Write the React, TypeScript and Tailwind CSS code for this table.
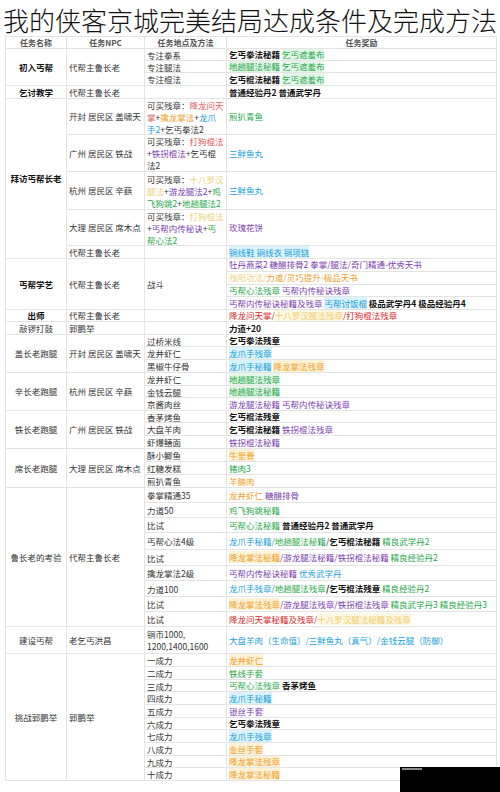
import React from "react";

type Seg = [string, string];
type Line = Seg[];
type Item = { h: number; loc: Line[]; reward: Line[] };
type Sub = { npc: string; items: Item[] };
type Group = { label: string; bold?: boolean; subs: Sub[] };

const S: Record<string, string> = {
  n: "text-[#333]",
  k: "font-bold text-[#111]",
  g: "text-[#1fa84a]",
  gb: "text-[#1fa84a] bg-[#e4f6e8]",
  c: "text-[#1a9fd8]",
  cb: "text-[#1a9fd8] bg-[#daf2fb]",
  p: "text-[#7a3cb0]",
  o: "text-[#f0a028]",
  ob: "text-[#f0a028] bg-[#fdf2d6]",
  r: "text-[#d62828]",
  rl: "text-[#e25a5a]",
  y: "text-[#f2d078]",
  yb: "text-[#efcc6c] bg-[#fdf8e2]",
};

const t = (s: string, k = "n"): Seg => [s, k];
const one = (...segs: Seg[]): Line[] => [segs];

const groups: Group[] = [
  {
    label: "初入丐帮",
    bold: true,
    subs: [
      {
        npc: "代帮主鲁长老",
        items: [
          { h: 12, loc: one(t("专注拳系")), reward: one(t("乞丐拳法秘籍", "k"), t(" "), t("乞丐遮羞布", "gb")) },
          { h: 12, loc: one(t("专注腿法")), reward: one(t("地趟腿法秘籍", "gb"), t(" "), t("乞丐遮羞布", "gb")) },
          { h: 13, loc: one(t("专注棍法")), reward: one(t("乞丐棍法秘籍", "k"), t(" "), t("乞丐遮羞布", "gb")) },
        ],
      },
    ],
  },
  {
    label: "乞讨教学",
    bold: true,
    subs: [{ npc: "代帮主鲁长老", items: [{ h: 13, loc: [], reward: one(t("普通经验丹2 普通武学丹", "k")) }] }],
  },
  {
    label: "拜访丐帮长老",
    bold: true,
    subs: [
      {
        npc: "开封 居民区 盖啸天",
        items: [
          {
            h: 36,
            loc: [
              [t("可买残章："), t("降龙问天", "rl")],
              [t("掌", "rl"), t("+"), t("擒龙掌法", "o"), t("+"), t("龙爪", "c")],
              [t("手2", "c"), t("+乞丐拳法2")],
            ],
            reward: one(t("煎扒青鱼", "g")),
          },
        ],
      },
      {
        npc: "广州 居民区 铁战",
        items: [
          {
            h: 37,
            loc: [
              [t("可买残章："), t("打狗棍法", "rl")],
              [t("+"), t("铁拐棍法", "p"), t("+乞丐棍")],
              [t("法2")],
            ],
            reward: one(t("三鲜鱼丸", "c")),
          },
        ],
      },
      {
        npc: "杭州 居民区 辛蕻",
        items: [
          {
            h: 38,
            loc: [
              [t("可买残章："), t("十八罗汉", "y")],
              [t("腿法", "y"), t("+"), t("游龙腿法2", "p"), t("+"), t("鸡", "g")],
              [t("飞狗跳2", "g"), t("+"), t("地趟腿法2", "g")],
            ],
            reward: one(t("三鲜鱼丸", "c")),
          },
        ],
      },
      {
        npc: "大理 居民区 席木点",
        items: [
          {
            h: 36,
            loc: [
              [t("可买残章："), t("打狗棍法", "y")],
              [t("+"), t("丐帮内传秘诀", "p"), t("+"), t("丐", "g")],
              [t("帮心法2", "g")],
            ],
            reward: one(t("玫瑰花饼", "p")),
          },
        ],
      },
      { npc: "代帮主鲁长老", items: [{ h: 13, loc: [], reward: one(t("铜线鞋 铜线衣 铜项链", "cb")) }] },
    ],
  },
  {
    label: "丐帮学艺",
    bold: true,
    subs: [
      {
        npc: "代帮主鲁长老",
        items: [
          {
            h: 51,
            loc: one(t("战斗")),
            reward: [
              [t("牡丹燕菜2 糖醋排骨2 拳掌/腿法/奇门精通-优秀天书", "p")],
              [t("残阳功法/", "y"), t("力道/灵巧提升-极品天书", "o")],
              [t("丐帮心法残章", "g"), t(" "), t("丐帮内传秘诀残章", "p")],
              [t("丐帮内传秘诀秘籍及残章", "p"), t(" "), t("丐帮讨饭棍", "cb"), t(" "), t("极品武学丹4 极品经验丹4", "k")],
            ],
          },
        ],
      },
    ],
  },
  {
    label: "出师",
    bold: true,
    subs: [
      {
        npc: "代帮主鲁长老",
        items: [{ h: 12, loc: [], reward: one(t("降龙问天掌", "r"), t("/", "r"), t("十八罗汉腿法残章", "yb"), t("/打狗棍法残章", "r")) }],
      },
    ],
  },
  {
    label: "敲锣打鼓",
    subs: [{ npc: "郭鹏举", items: [{ h: 13, loc: [], reward: one(t("力道+20", "k")) }] }],
  },
  {
    label: "盖长老跑腿",
    subs: [
      {
        npc: "开封 居民区 盖啸天",
        items: [
          { h: 12, loc: one(t("过桥米线")), reward: one(t("乞丐拳法残章", "k")) },
          { h: 13, loc: one(t("龙井虾仁")), reward: one(t("龙爪手残章", "cb")) },
          { h: 13, loc: one(t("黑椒牛仔骨")), reward: one(t("龙爪手秘籍", "cb"), t(" "), t("降龙掌法残章", "ob")) },
        ],
      },
    ],
  },
  {
    label: "辛长老跑腿",
    subs: [
      {
        npc: "杭州 居民区 辛蕻",
        items: [
          { h: 13, loc: one(t("龙井虾仁")), reward: one(t("地趟腿法残章", "gb")) },
          { h: 12, loc: one(t("金钱云腿")), reward: one(t("地趟腿法秘籍", "gb")) },
          { h: 13, loc: one(t("京酱肉丝")), reward: one(t("游龙腿法秘籍", "p"), t(" "), t("丐帮内传秘诀残章", "p")) },
        ],
      },
    ],
  },
  {
    label: "铁长老跑腿",
    subs: [
      {
        npc: "广州 居民区 铁战",
        items: [
          { h: 12, loc: one(t("香茅烤鱼")), reward: one(t("乞丐棍法残章", "k")) },
          { h: 13, loc: one(t("大盘羊肉")), reward: one(t("乞丐棍法秘籍", "k"), t(" "), t("铁拐棍法残章", "p")) },
          { h: 13, loc: one(t("虾爆鳝面")), reward: one(t("铁拐棍法秘籍", "p")) },
        ],
      },
    ],
  },
  {
    label: "席长老跑腿",
    subs: [
      {
        npc: "大理 居民区 席木点",
        items: [
          { h: 13, loc: one(t("酥小鲫鱼")), reward: one(t("牛里脊", "ob")) },
          { h: 13, loc: one(t("红糖发糕")), reward: one(t("猪肉3", "g")) },
          { h: 13, loc: one(t("煎扒青鱼")), reward: one(t("羊腩肉", "o")) },
        ],
      },
    ],
  },
  {
    label: "鲁长老的考验",
    subs: [
      {
        npc: "代帮主鲁长老",
        items: [
          { h: 15, loc: one(t("拳掌精通35")), reward: one(t("龙井虾仁", "o"), t(" "), t("糖醋排骨", "p")) },
          { h: 15, loc: one(t("力道50")), reward: one(t("鸡飞狗跳秘籍", "g")) },
          { h: 15, loc: one(t("比试")), reward: one(t("丐帮心法秘籍", "g"), t(" "), t("普通经验丹2 普通武学丹", "k")) },
          {
            h: 17,
            loc: one(t("丐帮心法4级")),
            reward: one(t("龙爪手秘籍", "c"), t("/", "c"), t("地趟腿法秘籍", "g"), t("/"), t("乞丐棍法秘籍", "k"), t(" "), t("精良武学丹2", "g")),
          },
          {
            h: 16,
            loc: one(t("比试")),
            reward: one(t("降龙掌法秘籍", "ob"), t("/", "p"), t("游龙腿法秘籍/铁拐棍法秘籍", "p"), t(" "), t("精良经验丹2", "g")),
          },
          { h: 15, loc: one(t("擒龙掌法2级")), reward: one(t("丐帮内传秘诀秘籍", "p"), t(" "), t("优秀武学丹", "c")) },
          {
            h: 16,
            loc: one(t("力道100")),
            reward: one(t("龙爪手残章", "c"), t("/", "c"), t("地趟腿法残章", "g"), t("/乞丐棍法残章", "k"), t(" "), t("精良经验丹2", "g")),
          },
          {
            h: 15,
            loc: one(t("比试")),
            reward: one(t("降龙掌法残章", "ob"), t("/", "p"), t("游龙腿法残章/铁拐棍法残章", "p"), t(" "), t("精良武学丹3 精良经验丹3", "g")),
          },
          { h: 15, loc: one(t("比试")), reward: one(t("降龙问天掌秘籍及残章", "r"), t("/", "r"), t("十八罗汉腿法秘籍及残章", "yb")) },
        ],
      },
    ],
  },
  {
    label: "建设丐帮",
    subs: [
      {
        npc: "老乞丐洪昌",
        items: [
          {
            h: 27,
            loc: [[t("铜币1000,")], [t("1200,1400,1600")]],
            reward: one(t("大盘羊肉（生命值）/三鲜鱼丸（真气）/金钱云腿（防御）", "c")),
          },
        ],
      },
    ],
  },
  {
    label: "挑战郭鹏举",
    subs: [
      {
        npc: "郭鹏举",
        items: [
          { h: 13, loc: one(t("一成力")), reward: one(t("龙井虾仁", "ob")) },
          { h: 13, loc: one(t("二成力")), reward: one(t("铁线手套", "g")) },
          { h: 12, loc: one(t("三成力")), reward: one(t("丐帮心法残章", "g"), t(" "), t("香茅烤鱼", "k")) },
          { h: 13, loc: one(t("四成力")), reward: one(t("龙爪手秘籍", "cb")) },
          { h: 13, loc: one(t("五成力")), reward: one(t("银丝手套", "p")) },
          { h: 12, loc: one(t("六成力")), reward: one(t("乞丐拳法残章", "k")) },
          { h: 13, loc: one(t("七成力")), reward: one(t("龙爪手残章", "cb")) },
          { h: 13, loc: one(t("八成力")), reward: one(t("金丝手套", "ob")) },
          { h: 12, loc: one(t("九成力")), reward: one(t("降龙掌法残章", "ob")) },
          { h: 13, loc: one(t("十成力")), reward: one(t("降龙掌法秘籍", "ob")) },
        ],
      },
    ],
  },
];

function Segs({ line }: { line: Line }) {
  return (
    <>
      {line.map(([s, k], i) => (
        <span key={i} className={S[k]}>
          {s}
        </span>
      ))}
    </>
  );
}

function ItemRow({ item }: { item: Item }) {
  return (
    <div className="flex border-b border-[#e4e4e4] overflow-hidden" style={{ height: item.h }}>
      <div className="w-[82px] shrink-0 border-r border-[#e4e4e4] pl-[2px] flex flex-col justify-center leading-[12px] whitespace-nowrap">
        {item.loc.map((l, i) => (
          <div key={i}>
            <Segs line={l} />
          </div>
        ))}
      </div>
      <div className="flex-1 flex flex-col whitespace-nowrap">
        {item.reward.map((l, i) => (
          <div
            key={i}
            className={
              "flex-1 min-h-0 flex items-center pl-[2px] leading-[11px] " +
              (i < item.reward.length - 1 ? "border-b border-[#e4e4e4]" : "")
            }
          >
            <div>
              <Segs line={l} />
            </div>
          </div>
        ))}
      </div>
    </div>
  );
}

export default function App() {
  return (
    <div className="relative w-[500px] h-[792px] bg-white overflow-hidden font-['Noto_Sans_CJK_SC',sans-serif] text-[8.5px] leading-[11px] text-[#333]">
      <div className="h-[36px] flex items-center pl-[3px] pt-[3px] text-[26px] leading-none font-light text-[#111] whitespace-nowrap">
        我的侠客京城完美结局达成条件及完成方法
      </div>
      <div className="ml-[5px] w-[492px] border-l border-r border-t border-[#e4e4e4]">
        <div className="flex h-[12px] border-b border-[#e4e4e4] font-bold text-[8px] text-[#555]">
          <div className="w-[61px] shrink-0 border-r border-[#e4e4e4] flex items-center justify-center">任务名称</div>
          <div className="w-[78px] shrink-0 border-r border-[#e4e4e4] flex items-center justify-center">任务NPC</div>
          <div className="w-[82px] shrink-0 border-r border-[#e4e4e4] flex items-center justify-center">任务地点及方法</div>
          <div className="flex-1 flex items-center justify-center">任务奖励</div>
        </div>
        {groups.map((g, gi) => (
          <div key={gi} className="flex">
            <div
              className={
                "w-[61px] shrink-0 border-r border-b border-[#e4e4e4] flex items-center justify-center whitespace-nowrap " +
                (g.bold ? "font-bold text-[#111]" : "text-[#333]")
              }
            >
              {g.label}
            </div>
            <div className="flex-1 flex flex-col">
              {g.subs.map((s, si) => (
                <div key={si} className="flex">
                  <div className="w-[78px] shrink-0 border-r border-b border-[#e4e4e4] flex items-center pl-[2px] whitespace-nowrap">
                    {s.npc}
                  </div>
                  <div className="flex-1 flex flex-col">
                    {s.items.map((it, ii) => (
                      <ItemRow key={ii} item={it} />
                    ))}
                  </div>
                </div>
              ))}
            </div>
          </div>
        ))}
      </div>
      <div className="absolute left-[400px] top-[767px] w-[100px] h-[25px] bg-black">
        <div className="absolute left-[2px] top-[1px] w-[20px] h-[2px] bg-[#8a8a8a]" />
      </div>
    </div>
  );
}
